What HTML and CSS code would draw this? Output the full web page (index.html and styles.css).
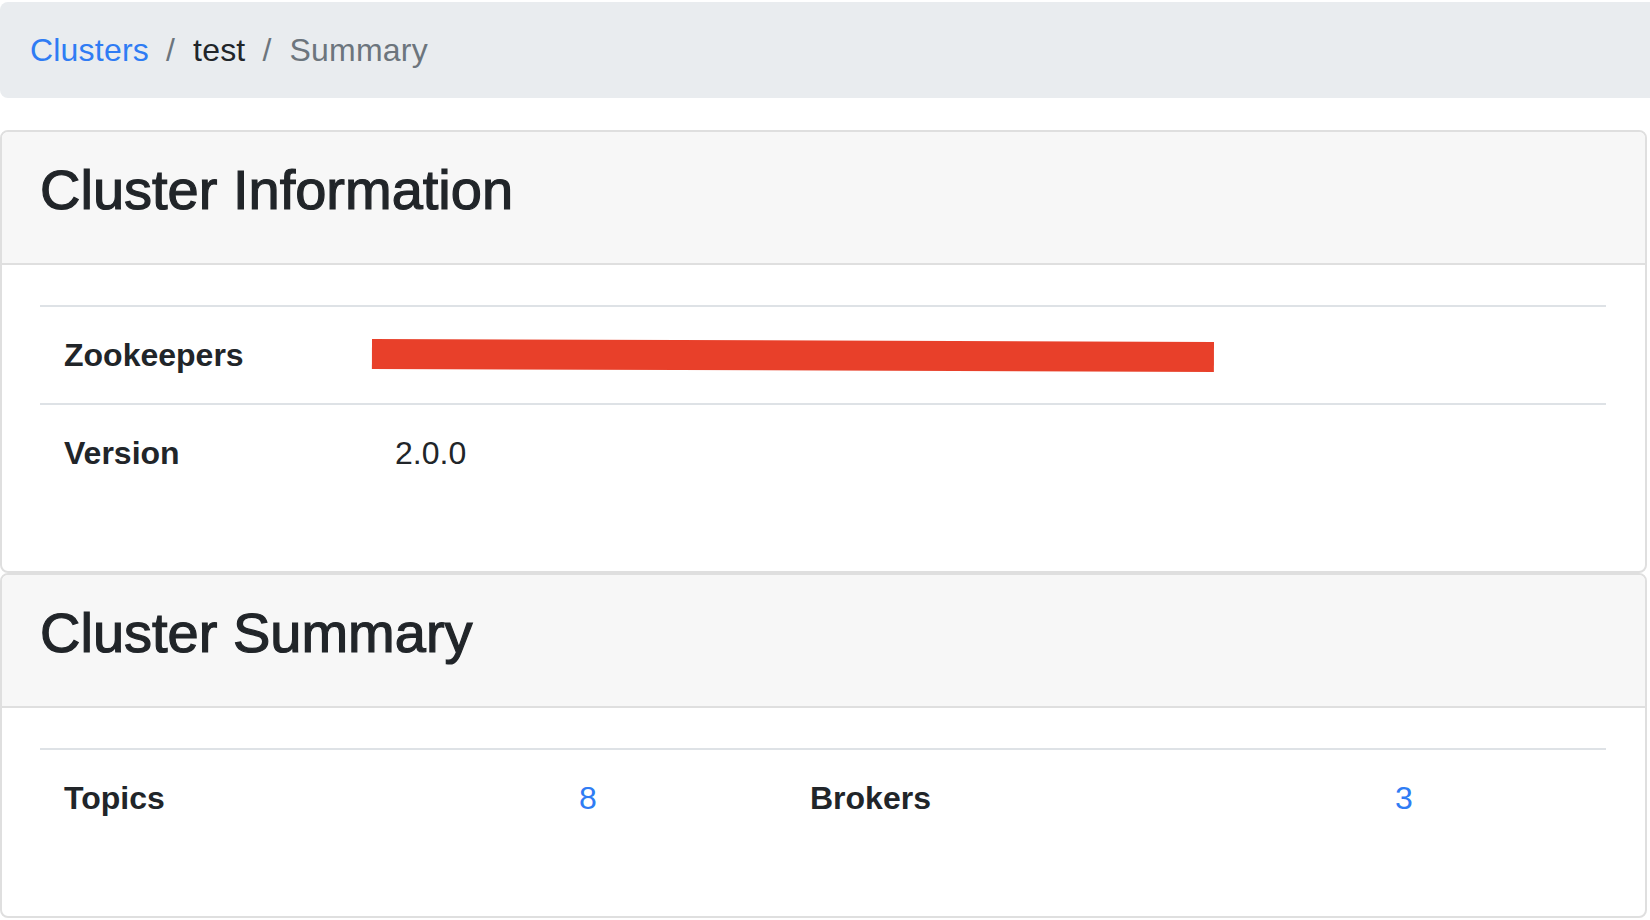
FILE: index.html
```html
<!DOCTYPE html>
<html lang="en">
<head>
<meta charset="utf-8">
<title>Cluster Summary</title>
<link rel="stylesheet" href="styles.css">
</head>
<body>
<div class="page">
  <nav>
    <ol class="breadcrumb">
      <li class="crumb"><a href="#">Clusters</a></li>
      <li class="crumb">test</li>
      <li class="crumb active">Summary</li>
    </ol>
  </nav>

  <section class="card">
    <div class="card-header"><h3>Cluster Information</h3></div>
    <div class="card-body">
      <table class="info">
        <colgroup><col class="c-info-label"><col></colgroup>
        <tbody>
          <tr>
            <th>Zookeepers</th>
            <td class="redacted"><span class="redact-bar"></span></td>
          </tr>
          <tr>
            <th>Version</th>
            <td>2.0.0</td>
          </tr>
        </tbody>
      </table>
    </div>
  </section>

  <section class="card">
    <div class="card-header"><h3>Cluster Summary</h3></div>
    <div class="card-body">
      <table class="summary">
        <colgroup><col class="c1"><col class="c2"><col class="c3"><col class="c4"></colgroup>
        <tbody>
          <tr>
            <th>Topics</th>
            <td><a href="#">8</a></td>
            <th>Brokers</th>
            <td><a href="#">3</a></td>
          </tr>
        </tbody>
      </table>
    </div>
  </section>
</div>
</body>
</html>
```
FILE: styles.css
```css
html, body {
  margin: 0;
  padding: 0;
  background: #ffffff;
  overflow: hidden;
}

body {
  font-family: "Liberation Sans", Arial, sans-serif;
  font-size: 32px;
  line-height: 1.5;
  color: #212529;
}

a {
  color: #2f7cf4;
  text-decoration: none;
}

.page {
  padding-top: 2px;
}

.breadcrumb {
  display: flex;
  list-style: none;
  margin: 0 0 32px 0;
  padding: 24px 30px;
  background: #e9ecef;
  border-radius: 8px 0 0 8px;
  letter-spacing: 0.2px;
}

.crumb + .crumb {
  padding-left: 17px;
}

.crumb + .crumb::before {
  content: "/";
  color: #6c757d;
  padding-right: 18px;
}

.crumb.active {
  color: #6c757d;
}

.card {
  width: 1647px;
  box-sizing: border-box;
  border: 2px solid #dfdfdf;
  border-radius: 8px;
  background: #ffffff;
  overflow: hidden;
}

.card-header {
  background: #f7f7f7;
  padding: 24px 38px 24px 38px;
  border-bottom: 2px solid #dfdfdf;
}

.card-header h3 {
  margin: 0 0 16px 0;
  font-size: 56px;
  line-height: 1.2;
  font-weight: 400;
  letter-spacing: 0;
  -webkit-text-stroke: 1.2px #212529;
}

.card-body {
  padding: 40px 39px 38px 38px;
}

table {
  width: 100%;
  border-collapse: collapse;
  table-layout: fixed;
  margin-bottom: 32px;
}

th, td {
  padding: 24px;
  border-top: 2px solid #dee2e6;
  text-align: left;
  vertical-align: top;
}

th {
  font-weight: 700;
}

.c-info-label { width: 331px; }

.c1 { width: 515px; }
.c2 { width: 231px; }
.c3 { width: 585px; }
.c4 { width: 235px; }

.redacted {
  position: relative;
}

.redact-bar {
  position: absolute;
  left: 1px;
  top: 32px;
  width: 842px;
  height: 30px;
  background: #e8402a;
  transform: rotate(0.2deg);
  transform-origin: left top;
}
```
